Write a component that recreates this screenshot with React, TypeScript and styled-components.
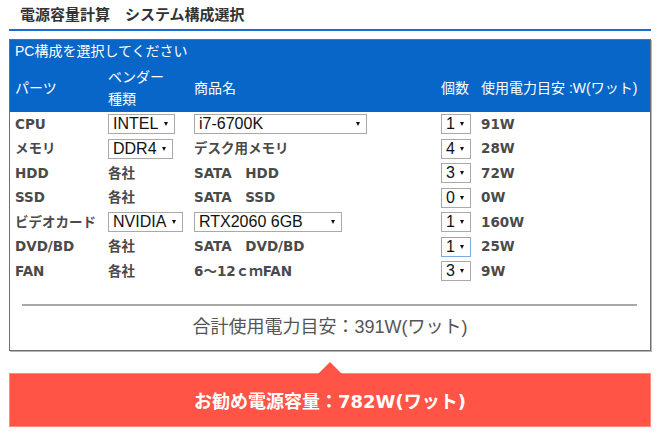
import React from "react";
import styled, { createGlobalStyle } from "styled-components";

const GlobalStyle = createGlobalStyle`
  html, body { margin: 0; padding: 0; background: #fff; }
  body { font-family: "Liberation Sans", "Noto Sans CJK JP", sans-serif; }
`;

const Page = styled.div`
  width: 661px;
  height: 438px;
  padding: 0 10px 0 9px;
  box-sizing: border-box;
  overflow: hidden;
`;

const TitleBar = styled.h1`
  margin: 0;
  height: 29px;
  line-height: 30px;
  padding-left: 11px;
  font-size: 15px;
  font-weight: bold;
  color: #333;
  border-bottom: 2px solid #1a6fd6;
  font-family: "Liberation Sans", "Noto Sans CJK JP", sans-serif;
`;

const Panel = styled.section`
  margin-top: 8px;
  border: 1px solid #6f6f6f;
  box-shadow: 1px 1px 0 #b5b5b5;
`;

const BlueHead = styled.div`
  background: #0866c8;
  color: #fff;
  padding: 0 5px 2px;
`;

const Caption = styled.div`
  height: 22px;
  line-height: 22px;
  font-size: 14px;
`;

const Grid = styled.div`
  display: grid;
  grid-template-columns: 93px 86px 247px 40px 1fr;
  align-items: center;
`;

const HeadGrid = styled(Grid)`
  margin-top: 4px;
  font-size: 14px;
  line-height: 22px;
`;

const HeadCell = styled.div``;

const Body = styled.div`
  padding: 0 5px;
`;

const Row = styled(Grid)`
  height: 24.5px;
`;

const Label = styled.div`
  font-family: "DejaVu Sans", "Noto Sans CJK JP", sans-serif;
  font-size: 13.5px;
  line-height: 16px;
  font-weight: bold;
  color: #4a4a4a;
  white-space: nowrap;
  margin-top: -1px;
`;

const SelectWrap = styled.div<{ $w: number }>`
  position: relative;
  width: ${(p) => p.$w}px;
  height: 20px;
`;

const NativeSelect = styled.select<{ $focus?: boolean }>`
  appearance: none;
  -webkit-appearance: none;
  width: 100%;
  height: 20px;
  box-sizing: border-box;
  margin: 0;
  padding: 0 14px 0 4px;
  border: 1px solid ${(p) => (p.$focus ? "#7fa8e0" : "#a9a9a9")};
  border-radius: 0;
  background: #fff;
  color: #111;
  font-family: "Liberation Sans", Arial, sans-serif;
  font-size: 16px;
  line-height: 18px;
  outline: none;
`;

const Caret = styled.span`
  position: absolute;
  right: 7px;
  top: 8px;
  width: 0;
  height: 0;
  border-left: 2.5px solid transparent;
  border-right: 2.5px solid transparent;
  border-top: 4px solid #111;
  pointer-events: none;
`;

const Divider = styled.hr`
  margin: 20px 13px 0 12px;
  border: 0;
  border-top: 2px solid #a9a9a9;
  height: 0;
`;

const Total = styled.div`
  text-align: center;
  font-size: 18px;
  color: #555;
  line-height: 24px;
  padding: 9px 0 11px;
`;

const Banner = styled.div`
  position: relative;
  margin-top: 22px;
  height: 54px;
  box-sizing: border-box;
  background: #ff5446;
  border: 1px solid #ff8a80;
  display: flex;
  align-items: center;
  justify-content: center;
  color: #fff;
  font-family: "DejaVu Sans", "Noto Sans CJK JP", sans-serif;
  font-size: 18px;
  font-weight: bold;
`;

const Pointer = styled.span`
  position: absolute;
  left: 50%;
  top: -12px;
  margin-left: -12px;
  width: 0;
  height: 0;
  border-left: 12px solid transparent;
  border-right: 12px solid transparent;
  border-bottom: 12px solid #ff5446;
`;

type Cell = string | { value: string; w: number; focus?: boolean };

const Dropdown = ({ value, w, focus }: { value: string; w: number; focus?: boolean }) => (
  <SelectWrap $w={w}>
    <NativeSelect $focus={focus} defaultValue={value}>
      <option value={value}>{value}</option>
    </NativeSelect>
    <Caret />
  </SelectWrap>
);

const renderCell = (c: Cell) =>
  typeof c === "string" ? <Label>{c}</Label> : <Dropdown value={c.value} w={c.w} focus={c.focus} />;

const rows: { part: string; vendor: Cell; product: Cell; count: Cell; watt: string }[] = [
  { part: "CPU", vendor: { value: "INTEL", w: 67 }, product: { value: "i7-6700K", w: 173 }, count: { value: "1", w: 30 }, watt: "91W" },
  { part: "メモリ", vendor: { value: "DDR4", w: 65 }, product: "デスク用メモリ", count: { value: "4", w: 30 }, watt: "28W" },
  { part: "HDD", vendor: "各社", product: "SATA　HDD", count: { value: "3", w: 30 }, watt: "72W" },
  { part: "SSD", vendor: "各社", product: "SATA　SSD", count: { value: "0", w: 30 }, watt: "0W" },
  { part: "ビデオカード", vendor: { value: "NVIDIA", w: 75 }, product: { value: "RTX2060 6GB", w: 148 }, count: { value: "1", w: 30 }, watt: "160W" },
  { part: "DVD/BD", vendor: "各社", product: "SATA　DVD/BD", count: { value: "1", w: 30, focus: true }, watt: "25W" },
  { part: "FAN", vendor: "各社", product: "6～12ｃｍFAN", count: { value: "3", w: 30 }, watt: "9W" },
];

export default function App() {
  return (
    <Page>
      <GlobalStyle />
      <TitleBar>電源容量計算　システム構成選択</TitleBar>
      <Panel>
        <BlueHead>
          <Caption>PC構成を選択してください</Caption>
          <HeadGrid>
            <HeadCell>パーツ</HeadCell>
            <HeadCell>
              ベンダー
              <br />
              種類
            </HeadCell>
            <HeadCell>商品名</HeadCell>
            <HeadCell>個数</HeadCell>
            <HeadCell>使用電力目安 :W(ワット)</HeadCell>
          </HeadGrid>
        </BlueHead>
        <Body>
          {rows.map((r) => (
            <Row key={r.part}>
              <Label>{r.part}</Label>
              {renderCell(r.vendor)}
              {renderCell(r.product)}
              {renderCell(r.count)}
              <Label>{r.watt}</Label>
            </Row>
          ))}
        </Body>
        <Divider />
        <Total>合計使用電力目安：391W(ワット)</Total>
      </Panel>
      <Banner>
        <Pointer />
        お勧め電源容量：782W(ワット)
      </Banner>
    </Page>
  );
}
